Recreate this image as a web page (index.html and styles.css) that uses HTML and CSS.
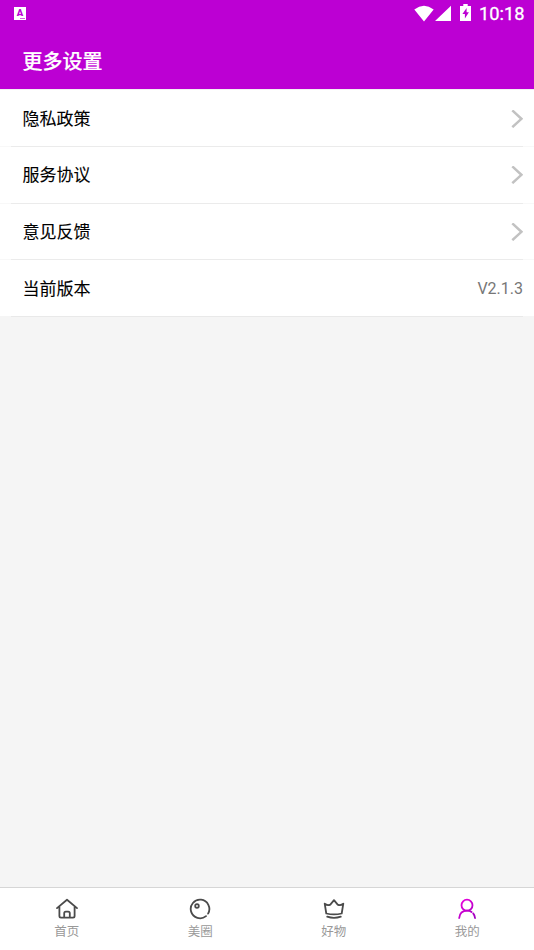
FILE: index.html
```html
<!DOCTYPE html>
<html lang="zh-CN">
<head>
<meta charset="utf-8">
<title>更多设置</title>
<link rel="stylesheet" href="styles.css">
</head>
<body>
<div class="app">
  <header class="header">
    <div class="status">
      <span class="ime">A</span>
      <div class="status-right">
        <svg width="38" height="17" viewBox="0 0 38 17" fill="#fff"><path d="M.3 4.4Q10 -2.8 19.7 4.4L10 16.4zM37 .7V16H21z"/></svg>
        <svg class="battery" width="11" height="17" viewBox="0 0 11 17"><path fill="#fff" d="M3.3 0h4.4v2H11v15H0V2h3.3z"/><path fill="#bc00d3" d="M6.6 4 2.4 10h2.5v4.5L8.9 8.2H6.6z"/></svg>
        <span class="time">10:18</span>
      </div>
    </div>
    <h1 class="title">更多设置</h1>
  </header>
  <main class="list">
    <div class="row"><span class="label">隐私政策</span><svg class="chevron" width="12" height="18" viewBox="0 0 12 18"><path d="M1.3.4 10.4 8.8l-9.1 8.4"/></svg></div>
    <div class="row"><span class="label">服务协议</span><svg class="chevron" width="12" height="18" viewBox="0 0 12 18"><path d="M1.3.4 10.4 8.8l-9.1 8.4"/></svg></div>
    <div class="row"><span class="label">意见反馈</span><svg class="chevron" width="12" height="18" viewBox="0 0 12 18"><path d="M1.3.4 10.4 8.8l-9.1 8.4"/></svg></div>
    <div class="row"><span class="label">当前版本</span><span class="version">V2.1.3</span></div>
  </main>
  <nav class="tabs">
    <div class="tab">
      <svg class="icon" viewBox="0 0 22 22"><path d="M1 10.1 11 1.7l10 8.4M3.4 8.8v9.3q0 1.6 1.6 1.6h12q1.6 0 1.6-1.6V8.8M8.2 19.2v-4q0-1.6 1.6-1.6h2.4q1.6 0 1.6 1.6v4"/></svg>
      <span>首页</span>
    </div>
    <div class="tab">
      <svg class="icon" viewBox="0 0 22 22"><path d="M17 18.1A9.3 9.3 0 1 1 19.1 15.6"/><circle cx="8" cy="8" r="1.8"/></svg>
      <span>美圈</span>
    </div>
    <div class="tab">
      <svg class="icon" viewBox="0 0 22 22"><path d="M3.3 15.5 1.7 5.7Q4.3 7.9 7.3 6.6L11 2.2l3.7 4.4q3 1.3 5.6-.9l-1.6 9.8Q11 17.4 3.3 15.5zM4.2 18.7Q11 21 17.8 18.7"/></svg>
      <span>好物</span>
    </div>
    <div class="tab">
      <svg class="icon active" viewBox="0 0 22 22"><defs><linearGradient id="violet" gradientUnits="userSpaceOnUse" x1="3" y1="1" x2="19" y2="20"><stop stop-color="#f000df"/><stop offset="1" stop-color="#9d00be"/></linearGradient></defs><circle cx="11" cy="7.2" r="5.5"/><path d="M3.2 20q.7-7.2 7.8-7.3 2.8 0 4.6 1.3M17.2 15.4q1.6 2 1.8 4.6"/></svg>
      <span>我的</span>
    </div>
  </nav>
</div>
</body>
</html>
```
FILE: styles.css
```css
* { box-sizing: border-box; }
body {
  margin: 0;
  font-family: Roboto, "Noto Sans CJK SC", sans-serif;
}
.app {
  display: flex;
  flex-direction: column;
  height: 950px;
  background: #f5f5f5;
}
.header {
  height: 89px;
  background: #bc00d3;
  color: #fff;
}
.status {
  display: flex;
  justify-content: space-between;
  height: 34px;
  padding: 5px 9px 0 14px;
}
.ime {
  width: 12px;
  height: 13px;
  margin-top: 2px;
  background: linear-gradient(#d560e3, #d560e3) 6px 11px / 5px 1px no-repeat, #fff;
  color: #bc00d3;
  font-size: 9.5px;
  font-weight: 900;
  line-height: 12px;
  text-align: center;
}
.status-right { display: flex; align-items: flex-start; }
.battery { margin: -1px 0 0 8px; }
.time {
  width: 46px;
  margin-left: 8px;
  font-size: 18.3px;
  font-weight: 400;
  -webkit-text-stroke: 0.3px #fff;
  line-height: 18px;
  white-space: nowrap;
}
.title {
  margin: 0;
  padding: 1px 0 0 22.5px;
  font-size: 20px;
  font-weight: 500;
  line-height: 55px;
  -webkit-text-stroke: 0.2px #fff;
}
.list { border-top: 1px solid #f1f1f1; }
.row {
  display: flex;
  align-items: center;
  justify-content: space-between;
  height: 56.5px;
  padding: 0 11px 0 22.5px;
  background:
    linear-gradient(#ebebeb, #ebebeb) 11px 100% / calc(100% - 22px) 1px no-repeat,
    linear-gradient(#f8f8f8, #f8f8f8) 0 100% / 100% 1px no-repeat,
    #fff;
  color: #000;
  font-size: 17px;
}
.row:first-child { height: 57px; }
.row:last-child {
  height: 57px;
  background:
    linear-gradient(#e9e9e9, #e9e9e9) 11px 100% / calc(100% - 22px) 1px no-repeat,
    linear-gradient(#f5f5f5, #f5f5f5) 0 100% / 100% 1px no-repeat,
    #fff;
}
.label {
  padding-bottom: 2.6px;
  -webkit-text-stroke: 0.1px #000;
}
.chevron { fill: none; stroke: #c2c2c2; stroke-width: 2.5; }
.version { color: #777; font-size: 16px; }
.tabs {
  display: flex;
  height: 63px;
  margin-top: auto;
  border-top: 1px solid #d6d6d6;
  background: #fff;
}
.tab {
  display: flex;
  flex: 1;
  flex-direction: column;
  align-items: center;
  gap: 2px;
  padding-top: 10px;
  color: #999;
  font-size: 12.5px;
  line-height: 20px;
}
.icon {
  width: 22px;
  height: 22px;
  fill: none;
  stroke: #4b4b4b;
  stroke-width: 1.8;
  stroke-linejoin: round;
  stroke-linecap: round;
}
.icon.active { stroke: url(#violet); }
```
